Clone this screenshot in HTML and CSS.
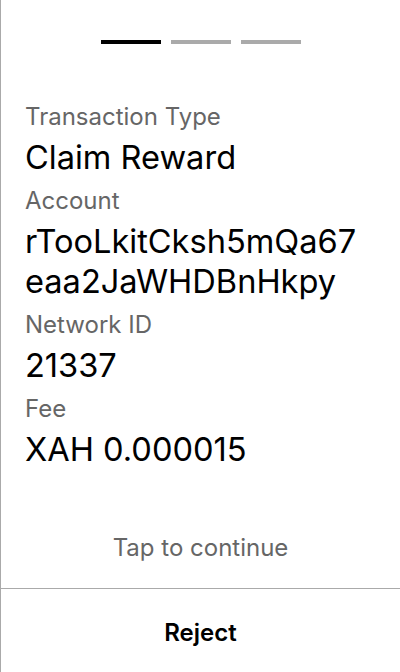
FILE: index.html
```html
<!DOCTYPE html>
<html>
<head>
<meta charset="utf-8">
<link rel="stylesheet" href="styles.css">
</head>
<body>
<div class="screen">
  <div class="main">
    <div class="steps">
      <span class="step active"></span>
      <span class="step"></span>
      <span class="step"></span>
    </div>
    <div class="fields">
      <div class="field">
        <div class="label">Transaction Type</div>
        <div class="value">Claim Reward</div>
      </div>
      <div class="field">
        <div class="label">Account</div>
        <div class="value">rTooLkitCksh5mQa67<br>eaa2JaWHDBnHkpy</div>
      </div>
      <div class="field">
        <div class="label">Network ID</div>
        <div class="value">21337</div>
      </div>
      <div class="field">
        <div class="label">Fee</div>
        <div class="value">XAH 0.000015</div>
      </div>
    </div>
    <div class="tap">Tap to continue</div>
  </div>
  <div class="footer">
    <div class="reject">Reject</div>
  </div>
</div>
</body>
</html>
```
FILE: styles.css
```css
* { box-sizing: border-box; }
html, body { margin: 0; padding: 0; background: #fff; }
body { font-family: Inter, "Noto Sans", sans-serif; color: #000; }
.screen {
  width: 400px;
  height: 672px;
  border-left: 1px solid #aaa;
  display: flex;
  flex-direction: column;
}
.main {
  flex: 1;
  display: flex;
  flex-direction: column;
  padding: 40px 0 0 24px;
}
.steps {
  display: flex;
  gap: 10px;
  justify-content: center;
  margin-left: -24px;
}
.step {
  width: 60px;
  height: 4px;
  background: #aaa;
}
.step.active { background: #000; }
.fields {
  display: flex;
  flex-direction: column;
  gap: 8px;
  margin-top: 57px;
}
.field {
  display: flex;
  flex-direction: column;
  gap: 4px;
}
.label {
  font-size: 24px;
  line-height: 32px;
  color: #666;
}
.value {
  font-size: 32.6px;
  line-height: 40px;
}
.tap {
  margin-top: auto;
  margin-left: -24px;
  text-align: center;
  font-size: 24px;
  line-height: 32px;
  color: #666;
  margin-bottom: 24px;
}
.footer {
  height: 84px;
  border-top: 1px solid #aaa;
  display: flex;
  align-items: center;
  justify-content: center;
  padding-top: 4px;
}
.reject {
  font-size: 24px;
  font-weight: 600;
  line-height: 32px;
}
```
